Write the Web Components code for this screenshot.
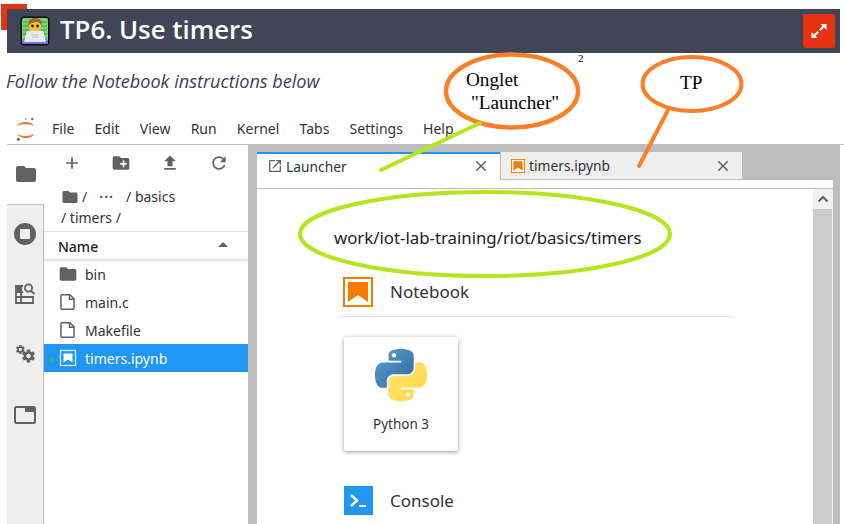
<!DOCTYPE html>
<html lang="en">
<head>
<meta charset="utf-8">
<title>TP6. Use timers</title>
<style>
  html, body { margin: 0; padding: 0; background: #fff; }
  body { font-family: "Noto Sans", "Open Sans", sans-serif; color: #222; }
</style>
</head>
<body>
<tp-page>
  <tp-title-bar slot="top">TP6. Use timers</tp-title-bar>
  <tp-intro slot="top">Follow the Notebook instructions below</tp-intro>
  <lab-menu slot="top"></lab-menu>
  <lab-sidetabs slot="left"></lab-sidetabs>
  <file-browser slot="left">
    <file-row kind="folder">bin</file-row>
    <file-row kind="file">main.c</file-row>
    <file-row kind="file">Makefile</file-row>
    <file-row kind="notebook" selected>timers.ipynb</file-row>
  </file-browser>
  <lab-dock slot="main">
    <lab-launcher></lab-launcher>
  </lab-dock>
  <tp-callouts slot="over"></tp-callouts>
</tp-page>

<script>
const FOLDER = 'M10 4H4c-1.1 0-1.99.9-1.99 2L2 18c0 1.1.9 2 2 2h16c1.1 0 2-.9 2-2V8c0-1.1-.9-2-2-2h-8l-2-2z';
const GEAR = 'M19.43 12.98c.04-.32.07-.64.07-.98s-.03-.66-.07-.98l2.11-1.65c.19-.15.24-.42.12-.64l-2-3.46c-.12-.22-.39-.3-.61-.22l-2.49 1c-.52-.4-1.08-.73-1.69-.98l-.38-2.65C14.46 2.18 14.25 2 14 2h-4c-.25 0-.46.18-.49.42l-.38 2.65c-.61.25-1.17.59-1.69.98l-2.49-1c-.23-.09-.49 0-.61.22l-2 3.46c-.13.22-.07.49.12.64l2.11 1.65c-.04.32-.07.65-.07.98s.03.66.07.98l-2.11 1.65c-.19.15-.24.42-.12.64l2 3.46c.12.22.39.3.61.22l2.49-1c.52.4 1.08.73 1.69.98l.38 2.65c.03.24.24.42.49.42h4c.25 0 .46-.18.49-.42l.38-2.65c.61-.25 1.17-.59 1.69-.98l2.49 1c.23.09.49 0 .61-.22l2-3.46c.12-.22.07-.49-.12-.64l-2.11-1.65zM12 15.5c-1.93 0-3.5-1.57-3.5-3.5s1.57-3.5 3.5-3.5 3.5 1.57 3.5 3.5-1.57 3.5-3.5 3.5z';
const CLOSE = 'M19 6.41L17.59 5 12 10.59 6.41 5 5 6.41 10.59 12 5 17.59 6.41 19 12 13.41 17.59 19 19 17.59 13.41 12z';

function icon(size, d, fill) {
  return `<svg width="${size}" height="${size}" viewBox="0 0 24 24" fill="${fill || '#616161'}"><path fill-rule="evenodd" d="${d}"/></svg>`;
}

const notebookIcon = (size, bg) => `<svg class="nb" width="${size}" height="${size}" viewBox="0 0 30 30">
  <rect x="1" y="1" width="28" height="28" fill="${bg}" stroke="#f57c00" stroke-width="2"/>
  <path d="M5 5h20v20l-10-7-10 7z" fill="#f57c00"/></svg>`;

class TpPage extends HTMLElement {
  constructor() {
    super();
    this.attachShadow({ mode: 'open' });
    this.shadowRoot.innerHTML = `
      <style>
        :host { display: flex; flex-direction: column; position: relative; width: 844px; height: 524px; overflow: hidden; background: #fff; }
        .row { display: flex; flex: 1; min-height: 0; margin-left: 7px; }
        .main { flex: 1; min-width: 0; display: flex; }
      </style>
      <slot name="top"></slot>
      <div class="row">
        <slot name="left"></slot>
        <div class="main"><slot name="main"></slot></div>
      </div>
      <slot name="over"></slot>`;
  }
}

class TpTitleBar extends HTMLElement {
  constructor() {
    super();
    this.attachShadow({ mode: 'open' });
    this.shadowRoot.innerHTML = `
      <style>
        :host { display: block; position: relative; margin: 9px 4px 0 7px; height: 44px; }
        .corner { position: absolute; left: -6px; top: -5px; width: 26px; height: 26px; background: #e63312; }
        .bar { position: relative; height: 44px; background: #414558; display: flex; align-items: center; padding: 0 5px 0 13px; }
        h1 { margin: 0 0 0 10px; flex: 1; font: 600 25.8px/40px "Open Sans", sans-serif; color: #fff; padding-bottom: 4px; }
        .expand { width: 32px; height: 34px; background: #e63312; border-radius: 2px; display: flex; align-items: center; justify-content: center; }
      </style>
      <div class="corner"></div>
      <div class="bar">
        <svg width="30" height="30" viewBox="0 0 30 30">
          <rect x="0.5" y="0.5" width="29" height="29" rx="4" fill="#0d0d16"/>
          <rect x="2" y="2" width="26" height="26" rx="2" fill="#7ed36e"/>
          <path d="M3 6h7M20 6h7M3 10h6M21 10h6M3 14h6M21 14h6M3 18h5M22 18h5" stroke="#3f9f4a" stroke-width="1.2"/>
          <path d="M2 26c0-2 2-4 4-4h18c2 0 4 2 4 4v1c0 1-1 1-2 1H4c-1 0-2 0-2-1z" fill="#7a6ae0"/>
          <circle cx="15" cy="10" r="6" fill="#fbc02d"/>
          <path d="M8.500 10c-1-6 3-8 6.500-8s7.500 2 6.500 8c-1-3-3-4-4-4s-7 0-9 4z" fill="#a5682a"/>
          <circle cx="12.500" cy="10" r="1.400" fill="#222"/><circle cx="17.500" cy="10" r="1.400" fill="#222"/>
          <path d="M4 26l3-11h16l3 11z" fill="#e8e8ee"/>
          <path d="M12 19h6M12 21h6" stroke="#b5b5c0" stroke-width=".8"/>
        </svg>
        <h1><slot></slot></h1>
        <div class="expand">
          <svg width="20" height="20" viewBox="0 0 20 20" fill="#fff" stroke="#fff" stroke-width="2.200">
            <path d="M10.800 9.200L15 5"/>
            <path d="M11.500 3h6v6z" stroke="none"/>
            <path d="M9.200 10.800L5 15"/>
            <path d="M2.500 11v6h6z" stroke="none"/>
          </svg>
        </div>
      </div>`;
  }
}

class TpIntro extends HTMLElement {
  constructor() {
    super();
    this.attachShadow({ mode: 'open' });
    this.shadowRoot.innerHTML = `
      <style>
        :host { display: block; margin: 16px 0 0 6px; height: 24px; font: italic 400 18.1px/24px "Open Sans", sans-serif; color: #3c4058; white-space: nowrap; }
      </style>
      <slot></slot>`;
  }
}

class LabMenu extends HTMLElement {
  constructor() {
    super();
    this.attachShadow({ mode: 'open' });
    const items = ['File', 'Edit', 'View', 'Run', 'Kernel', 'Tabs', 'Settings', 'Help'];
    this.shadowRoot.innerHTML = `
      <style>
        :host { display: flex; align-items: center; margin: 20px 0 0 7px; height: 31px; border-bottom: 1px solid #bdbdbd; }
        .logo { width: 38px; display: flex; justify-content: center; margin-right: 7px; }
        span { margin-right: 20.2px; font-size: 14px; color: #333; }
      </style>
      <div class="logo">
        <svg width="20" height="24" viewBox="0 0 20 24">
          <path d="M1 9C4 3.500 16 3.500 18 9C14 6.500 5 6.500 1 9z" fill="#f37726"/>
          <path d="M1 17C5 19.500 14 19.500 18 17C16 22.500 4 22.500 1 17z" fill="#f37726"/>
          <circle cx="16.300" cy="2" r="1.300" fill="#6f6f6f"/>
          <circle cx="10" cy="2" r=".8" fill="#767677"/>
          <circle cx="2.300" cy="22.300" r="1.500" fill="#616161"/>
        </svg>
      </div>
      ${items.map(t => `<span>${t}</span>`).join('')}`;
  }
}

class LabSidetabs extends HTMLElement {
  constructor() {
    super();
    this.attachShadow({ mode: 'open' });
    const stop = `<svg width="22" height="22" viewBox="0 0 22 22"><circle cx="11" cy="11" r="11" fill="#616161"/><rect x="6" y="6" width="10" height="10" rx="1" fill="#eee"/></svg>`;
    const running = `<svg width="22" height="24" viewBox="0 0 22 24" fill="none" stroke="#616161" stroke-width="1.800">
      <path d="M9 4H2v17h17v-7"/><path d="M2 10h7M2 15h17M7 10v11" /><path d="M3 5h5v5H3z" fill="#616161" stroke="none"/>
      <circle cx="14.500" cy="6" r="3.600"/><path d="M17 9l3.500 3"/></svg>`;
    const gears = `<svg width="20" height="20" viewBox="0 0 20 20" fill="#616161">
      <g transform="translate(0 -.9) scale(.45)"><path fill-rule="evenodd" d="${GEAR}"/></g>
      <g transform="translate(5.700 3.200) scale(.65)"><path fill-rule="evenodd" d="${GEAR}"/></g></svg>`;
    const tabs = `<svg width="22" height="18" viewBox="0 0 22 18" fill="none"><rect x="1" y="1" width="20" height="16" rx="1.500" stroke="#616161" stroke-width="2"/><path d="M11 1h10v5H11z" fill="#616161"/></svg>`;
    this.shadowRoot.innerHTML = `
      <style>
        :host { display: flex; flex-direction: column; width: 37px; flex: none; background: #eee; border-right: 1px solid #bdbdbd; box-sizing: border-box; }
        .tab { display: flex; align-items: center; justify-content: center; }
        .active { height: 57px; padding-bottom: 2px; background: #fff; border-bottom: 1px solid #bdbdbd; margin-right: -1px; }
        .t1 { height: 58px; }
        .t2 { height: 62px; }
        .t3 { height: 60px; }
        .t4 { height: 60px; }
      </style>
      <div class="tab active">${icon(24, FOLDER)}</div>
      <div class="tab t1">${stop}</div>
      <div class="tab t2">${running}</div>
      <div class="tab t3">${gears}</div>
      <div class="tab t4">${tabs}</div>`;
  }
}

class FileRow extends HTMLElement {
  constructor() {
    super();
    this.attachShadow({ mode: 'open' });
    const kind = this.getAttribute('kind');
    const sel = this.hasAttribute('selected');
    let ic = '';
    if (kind === 'folder') ic = icon(20, FOLDER);
    if (kind === 'file') ic = `<svg width="20" height="20" viewBox="0 0 20 20" fill="none" stroke="#616161" stroke-width="1.500"><path d="M4 2.800h8l4 4v9.500a1 1 0 0 1-1 1H4a1 1 0 0 1-1-1V3.800a1 1 0 0 1 1-1z"/><path d="M11.500 3v4.300H16"/></svg>`;
    if (kind === 'notebook') ic = `<svg width="20" height="20" viewBox="0 0 20 20"><rect x="2.500" y="2.500" width="15" height="15" fill="#2196f3" stroke="#e3f2fd" stroke-width="1.300"/><path d="M5.500 5.500h9v9l-4.500-3-4.500 3z" fill="#fff"/></svg>`;
    this.shadowRoot.innerHTML = `
      <style>
        :host { display: flex; align-items: center; height: 28px; padding-left: 14px; font-size: 14px; position: relative; color: ${sel ? '#fff' : '#333'}; background: ${sel ? '#2196f3' : 'transparent'}; }
        svg { flex: none; margin-right: 7px; }
        .dot { position: absolute; left: 5px; top: 14px; width: 4px; height: 4px; border-radius: 50%; background: #4caf50; }
      </style>
      ${sel ? '<i class="dot"></i>' : ''}${ic}<slot></slot>`;
  }
}

class FileBrowser extends HTMLElement {
  constructor() {
    super();
    this.attachShadow({ mode: 'open' });
    this.shadowRoot.innerHTML = `
      <style>
        :host { display: block; width: 204px; flex: none; background: #fff; font-size: 14px; color: #333; }
        .tools { height: 35px; padding-bottom: 2px; display: flex; align-items: center; padding-left: 18px; }
        .tools div { width: 49px; flex: none; display: flex; justify-content: flex-start; }
        .crumbs { padding: 4px 8px 0 17px; height: 45px; line-height: 21px; border-bottom: 1px solid #e0e0e0; }
        .crumbs svg { vertical-align: -4px; margin-right: 3px; }
        .crumbs b { font-weight: 700; letter-spacing: 1px; margin: 0 12px; color: #555; }
        .head { display: flex; align-items: center; justify-content: space-between; height: 26px; padding: 1px 20px 0 14px; font-weight: 500; color: #222; border-bottom: 1px solid #e0e0e0; box-shadow: 0 1px 2px rgba(0,0,0,.12); }
        .head i { width: 0; height: 0; border: 5px solid transparent; border-top: 0; border-bottom: 5px solid #616161; margin-bottom: 3px; }
      </style>
      <div class="tools">
        <div>${icon(20, 'M19 13h-6v6h-2v-6H5v-2h6V5h2v6h6v2z')}</div>
        <div>${icon(20, 'M20 6h-8l-2-2H4c-1.110 0-1.990.890-1.990 2L2 18c0 1.110.890 2 2 2h16c1.110 0 2-.890 2-2V8c0-1.110-.890-2-2-2zm-1 8h-3v3h-2v-3h-3v-2h3V9h2v3h3v2z')}</div>
        <div>${icon(20, 'M9 16h6v-6h4l-7-7-7 7h4zm-4 2h14v2H5z')}</div>
        <div>${icon(20, 'M17.650 6.350C16.200 4.900 14.210 4 12 4c-4.420 0-7.990 3.580-7.990 8s3.570 8 7.990 8c3.730 0 6.840-2.550 7.730-6h-2.080c-.820 2.330-3.040 4-5.650 4-3.310 0-6-2.690-6-6s2.690-6 6-6c1.660 0 3.140.690 4.220 1.780L13 11h7V4l-2.350 2.350z')}</div>
      </div>
      <div class="crumbs">${icon(18, FOLDER)}/<b>···</b>/ basics<br>/ timers /</div>
      <div class="head">Name<i></i></div>
      <slot></slot>`;
  }
}

class LabDock extends HTMLElement {
  constructor() {
    super();
    this.attachShadow({ mode: 'open' });
    this.shadowRoot.innerHTML = `
      <style>
        :host { display: flex; flex-direction: column; flex: 1; min-width: 0; margin-right: 4px; background: #bdbdbd; padding: 7px 7px 0 9px; }
        .tabs { display: flex; height: 28px; flex: none; font-size: 13.8px; color: #333; }
        .tab { width: 243px; box-sizing: border-box; height: 28px; display: flex; align-items: center; padding: 0 10px; gap: 4px; background: #eee; margin-right: 1px; }
        .tab span { flex: 1; }
        .on { background: #fff; border-top: 2px solid #2196f3; padding-bottom: 2px; }
        .on svg:first-child { margin-right: -1px; }
        .off { border-bottom: 1px solid #bdbdbd; width: 241px; }
        .strip { height: 8px; flex: none; background: #fff; border-bottom: 1px solid #bdbdbd; }
        .body { flex: 1; min-height: 0; display: flex; background: #fff; }
        .scroll { width: 20px; flex: none; display: flex; flex-direction: column; background: #eee; }
        .up { height: 20px; display: flex; align-items: center; justify-content: center; background: #f0f0f0; }
        .thumb { flex: 1; background: #ccc; margin-right: 1px; }
        .pane { flex: 1; min-width: 0; }
      </style>
      <div class="tabs">
        <div class="tab on">${icon(16, 'M19 19H5V5h7V3H5c-1.110 0-2 .9-2 2v14c0 1.100.890 2 2 2h14c1.100 0 2-.9 2-2v-7h-2v7zM14 3v2h3.590l-9.830 9.830 1.410 1.410L19 6.410V10h2V3h-7z')}<span>Launcher</span>${icon(18, CLOSE)}</div>
        <div class="tab off">${notebookIcon(14, '#fff')}<span>timers.ipynb</span>${icon(18, CLOSE)}</div>
      </div>
      <div class="strip"></div>
      <div class="body">
        <div class="pane"><slot></slot></div>
        <div class="scroll">
          <div class="up"><svg width="14" height="14" viewBox="0 0 14 14" fill="none" stroke="#616161" stroke-width="2"><path d="M2.500 9.500L7 5l4.500 4.500"/></svg></div>
          <div class="thumb"></div>
        </div>
      </div>`;
  }
}

class LabLauncher extends HTMLElement {
  constructor() {
    super();
    this.attachShadow({ mode: 'open' });
    this.shadowRoot.innerHTML = `
      <style>
        :host { display: block; padding: 33px 0 0 87px; color: #333; }
        .cwd { height: 55px; margin-left: -10px; font-size: 16.8px; line-height: 32px; color: #222; white-space: nowrap; }
        .title { display: flex; align-items: center; gap: 17px; height: 29px; font-size: 17px; }
        .title .nb { margin-left: -1px; }
        .rule { width: 394px; margin: 10px 0 20px -5px; border-top: 1px solid #e0e0e0; }
        .card { width: 114px; height: 114px; box-shadow: 0 1px 4px rgba(0,0,0,.4); border-radius: 2px; display: flex; flex-direction: column; align-items: center; font-size: 13.5px; }
        .card svg { margin: 12px 0 14px; }
        .gap { height: 35px; }
        .con { width: 29px; height: 29px; background: #2196f3; }
      </style>
      <div class="cwd">work/iot-lab-training/riot/basics/timers</div>
      <div class="title">${notebookIcon(30, '#fff')}Notebook</div>
      <div class="rule"></div>
      <div class="card">
        <svg width="52" height="52" viewBox="0 0 110 110">
          <defs>
            <linearGradient id="pb" x1="0" y1="0" x2="1" y2="1"><stop offset="0" stop-color="#5a9fd4"/><stop offset="1" stop-color="#306998"/></linearGradient>
            <linearGradient id="py" x1="0" y1="0" x2="1" y2="1"><stop offset="0" stop-color="#ffd43b"/><stop offset="1" stop-color="#ffe873"/></linearGradient>
          </defs>
          <path fill="url(#pb)" fill-rule="evenodd" d="M54.900 0C26.800 0 28.600 12.200 28.600 12.200l0 12.600h26.800v3.800H17.900S0 26.600 0 54.900c0 28.300 15.700 27.300 15.700 27.300h9.300V69.100s-.5-15.700 15.400-15.700h26.600s14.900.2 14.900-14.400V14.800S84.200 0 54.900 0zM40.200 8.500c2.700 0 4.800 2.200 4.800 4.800s-2.200 4.800-4.800 4.800-4.800-2.200-4.800-4.800 2.200-4.800 4.800-4.800z"/>
          <path fill="url(#py)" fill-rule="evenodd" transform="rotate(180 55 55)" d="M54.900 0C26.800 0 28.600 12.200 28.600 12.200l0 12.600h26.800v3.800H17.900S0 26.600 0 54.900c0 28.300 15.700 27.300 15.700 27.300h9.300V69.100s-.5-15.700 15.400-15.700h26.600s14.900.2 14.900-14.400V14.800S84.200 0 54.900 0zM40.200 8.500c2.700 0 4.800 2.200 4.800 4.800s-2.200 4.800-4.800 4.800-4.800-2.200-4.800-4.800 2.200-4.800 4.800-4.800z"/>
        </svg>
        Python 3
      </div>
      <div class="gap"></div>
      <div class="title">
        <svg class="con" viewBox="0 0 29 29"><rect width="29" height="29" fill="#2196f3"/><path d="M7 9l6 5.500-6 5.500" fill="none" stroke="#fff" stroke-width="2.500"/><path d="M15 20h7" stroke="#fff" stroke-width="2"/></svg>
        Console
      </div>`;
  }
}

class TpCallouts extends HTMLElement {
  constructor() {
    super();
    this.attachShadow({ mode: 'open' });
    this.shadowRoot.innerHTML = `
      <style>
        :host { display: block; position: absolute; inset: 0; pointer-events: none; font: 19.2px/23px "Liberation Serif", serif; color: #000; }
        svg { position: absolute; inset: 0; }
        div { position: absolute; white-space: pre; }
      </style>
      <svg width="844" height="524" fill="none" stroke-linecap="round">
        <ellipse cx="512" cy="91" rx="66" ry="36.500" stroke="#fd7f28" stroke-width="4.500" fill="#fff"/>
        <ellipse cx="692" cy="84" rx="49.500" ry="27" stroke="#fd7f28" stroke-width="4" fill="#fff"/>
        <ellipse cx="485" cy="234" rx="185" ry="42" stroke="#b5e61d" stroke-width="4"/>
        <path d="M480 123L381 170" stroke="#b5e61d" stroke-width="4"/>
        <path d="M668 110L639 166" stroke="#fd7f28" stroke-width="4"/>
      </svg>
      <div style="left:466px;top:68px">Onglet</div>
      <div style="left:471px;top:91px">"Launcher"</div>
      <div style="left:680px;top:71px">TP</div>
      <div style="left:578px;top:52px;font-size:11px;line-height:12px">2</div>`;
  }
}

customElements.define('tp-page', TpPage);
customElements.define('tp-title-bar', TpTitleBar);
customElements.define('tp-intro', TpIntro);
customElements.define('lab-menu', LabMenu);
customElements.define('lab-sidetabs', LabSidetabs);
customElements.define('file-row', FileRow);
customElements.define('file-browser', FileBrowser);
customElements.define('lab-dock', LabDock);
customElements.define('lab-launcher', LabLauncher);
customElements.define('tp-callouts', TpCallouts);
</script>
</body>
</html>
